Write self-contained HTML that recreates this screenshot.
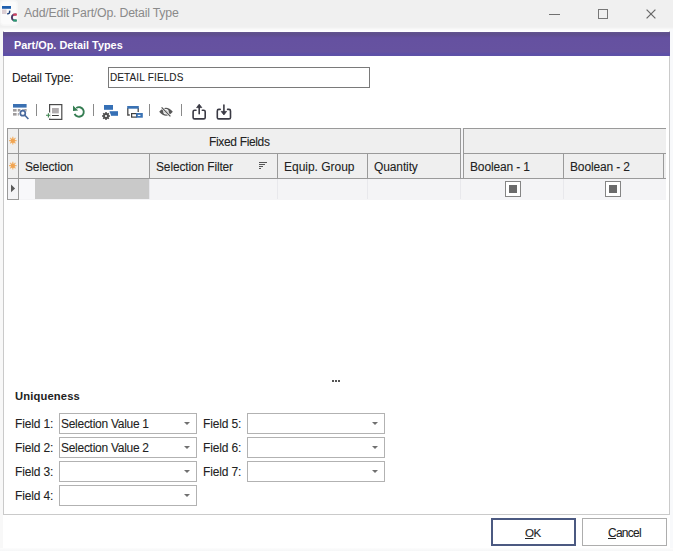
<!DOCTYPE html>
<html><head><meta charset="utf-8">
<style>
*{box-sizing:border-box;margin:0;padding:0}
html,body{width:673px;height:551px;overflow:hidden;background:#fff}
body{position:relative;font-family:"Liberation Sans",sans-serif;font-size:11px;color:#222}
.a{position:absolute;white-space:nowrap}
#title{left:0;top:0;width:673px;height:31px;background:linear-gradient(#f0f0f0 0,#f0f0f0 27px,#f8f8f8 29px,#fff 31px)}
#ttext{left:24px;top:6px;font-size:12.3px;letter-spacing:-0.2px;color:#8a8a8a}
#panel{left:3px;top:31px;width:667px;height:484px;border:1px solid #cacaca;border-top:none}
#hdr{left:3px;top:32px;width:667px;height:24px;background:linear-gradient(#64568f 0,#5e4e8c 2px,#6551a0 6px,#6652a0 20px,#5d4fa8 22px,#5f52a6 24px)}
#htext{left:14px;top:39px;font-weight:bold;color:#fff;font-size:10.9px}
.lbl{color:#222;font-size:12px;letter-spacing:-0.15px;-webkit-text-stroke:0.08px #222}
.inp{border:1px solid #7a7a7a;background:#fff}
.sep{width:1px;height:12px;background:#8a8a8a;top:104px}
.hc{background:#efefef}
.bl{background:#9a9a9a}
.combo{border:1px solid #b2b2b2;background:#fff;width:138px;height:21px}
.arr{width:0;height:0;border-left:3px solid transparent;border-right:3px solid transparent;border-top:3px solid #707070}
.btn{border:1px solid #adadad;background:#fff;width:85px;height:28px}
</style></head><body>
<div id="title" class="a"></div>
<!-- app icon -->
<svg class="a" style="left:0;top:0" width="24" height="28" viewBox="0 0 24 28">
  <rect x="0" y="0" width="18" height="26" rx="4" fill="#fff" opacity="0.4"/>
  <rect x="1" y="1.5" width="15.5" height="23" rx="3" fill="#fff" opacity="0.5"/>
  <rect x="2" y="6" width="9" height="2.8" fill="#1f5fae"/>
  <rect x="2" y="9.4" width="4.5" height="4.6" fill="#dccfd4"/>
  <path d="M9.6 10.6 Q10.2 14 7.2 13.8" stroke="#1d3f7a" stroke-width="1.5" fill="none"/>
  <path d="M16.2 14.6 Q12 14 11.9 17.5 Q12 21 16.4 20.5" stroke="#4c3a66" stroke-width="2" fill="none"/>
  <path d="M13.2 14.6 L16.9 14.6" stroke="#d64060" stroke-width="2"/>
  <path d="M13 20.5 L16.9 20.5" stroke="#2a9a72" stroke-width="2"/>
</svg>
<div id="ttext" class="a">Add/Edit Part/Op. Detail Type</div>
<!-- window controls -->
<div class="a" style="left:549px;top:14px;width:11px;height:1px;background:#707070"></div>
<div class="a" style="left:598px;top:9px;width:10px;height:10px;border:1px solid #777"></div>
<svg class="a" style="left:646px;top:9px" width="10" height="10" viewBox="0 0 10 10"><path d="M0.6 0.6L9.4 9.4M9.4 0.6L0.6 9.4" stroke="#686868" stroke-width="1.25"/></svg>

<div class="a" style="left:0;top:29px;width:3px;height:522px;background:#f8f8f8"></div>
<div class="a" style="left:670px;top:29px;width:3px;height:522px;background:#f8f9fb"></div>
<div class="a" style="left:0;top:548px;width:673px;height:3px;background:linear-gradient(#fdfdfd,#f5f6f7)"></div>
<div id="panel" class="a"></div>
<div id="hdr" class="a"></div>
<div id="htext" class="a">Part/Op. Detail Types</div>

<div class="a lbl" style="left:12px;top:71px">Detail Type:</div>
<div class="a inp" style="left:108px;top:67px;width:262px;height:21px"></div>
<div class="a lbl" style="left:110px;top:71px;font-size:11.4px;letter-spacing:0.1px;word-spacing:0.5px;transform:scaleX(0.88);transform-origin:0 0">DETAIL FIELDS</div>

<!-- toolbar -->
<svg class="a" style="left:0;top:96px" width="240" height="28" viewBox="0 96 240 28">
  <!-- icon1 grid search -->
  <rect x="13" y="104" width="13.6" height="3.6" fill="#3a70b2"/>
  <rect x="13" y="109" width="3.6" height="2.6" fill="#9e9b9c"/>
  <rect x="17.8" y="109" width="2.6" height="2.6" fill="#9e9b9c"/>
  <rect x="22" y="109" width="4.6" height="2.6" fill="#9e9b9c"/>
  <rect x="13" y="113" width="3.6" height="2.6" fill="#9e9b9c"/>
  <rect x="17.8" y="113" width="1" height="2.6" fill="#9e9b9c"/>
  <circle cx="22.8" cy="113.2" r="3.6" fill="#fff"/>
  <circle cx="22.8" cy="113.2" r="2.5" stroke="#4a6a9e" stroke-width="1.7" fill="#fff"/>
  <path d="M24.6 115 L28.4 119" stroke="#4a6a9e" stroke-width="1.6"/>
  <!-- icon2 -->
  <rect x="49.6" y="104.6" width="12.2" height="14.8" stroke="#4a4a4a" stroke-width="1.2" fill="#fff"/>
  <rect x="52" y="108" width="6.8" height="5.4" fill="#b0acae"/>
  <path d="M52 115.5 H58.8" stroke="#3c3c3c" stroke-width="1"/>
  <rect x="47.5" y="112.5" width="3" height="6" fill="#fff"/>
  <path d="M46 115.3 H50.2 M48.4 113.2 V117.4" stroke="#3f8450" stroke-width="1.1"/>
  <!-- refresh -->
  <path d="M76.3 107.95 A4.8 4.8 0 1 1 74.6 113.9" stroke="#357d52" stroke-width="1.9" fill="none"/>
  <path d="M73 105.6 L73 111 L78.2 110.6 Z" fill="#357d52"/>
  <!-- icon4 -->
  <rect x="104" y="105" width="9" height="4.8" fill="#3670b6"/>
  <rect x="109.6" y="111.2" width="8.4" height="4.6" fill="#3670b6"/>
  <circle cx="106" cy="116" r="5" fill="#fff"/>
  <circle cx="106" cy="116" r="2.9" fill="#505050"/>
  <path d="M106 112 V120 M102 116 H110 M103.2 113.2 L108.8 118.8 M108.8 113.2 L103.2 118.8" stroke="#505050" stroke-width="1.5"/>
  <circle cx="106" cy="116" r="1.1" fill="#fff"/>
  <!-- icon5 -->
  <path d="M127.8 108 V115 H138.2 V108" stroke="#4a4a4a" stroke-width="1.3" fill="none"/>
  <rect x="127.2" y="106" width="11.6" height="2.7" fill="#3a72b4"/>
  <rect x="129.8" y="112" width="14" height="6.8" fill="#fff"/>
  <rect x="131.6" y="113.6" width="5" height="3.5" stroke="#3f3f3f" stroke-width="1.2" fill="#fff"/>
  <rect x="136.2" y="113" width="6.6" height="4.7" fill="#3a72b4"/>
  <path d="M137.8 115.4 H140.4" stroke="#fff" stroke-width="1.1"/>
  <!-- eye slash -->
  <path d="M159.2 111.8 Q166 103.8 172.8 111.8 Q166 119.6 159.2 111.8 Z" fill="#585858"/>
  <circle cx="166" cy="111.8" r="2.7" fill="#fff"/>
  <circle cx="166" cy="111.8" r="1.5" fill="#585858"/>
  <path d="M161 106.6 L171 116.8" stroke="#fff" stroke-width="2.4"/>
  <path d="M161.6 107.4 L170.4 116.4" stroke="#585858" stroke-width="1.3"/>
  <!-- upload -->
  <path d="M196 110.2 H194.6 Q193.1 110.2 193.1 111.7 V117.4 Q193.1 118.9 194.6 118.9 H203.7 Q205.2 118.9 205.2 117.4 V111.7 Q205.2 110.2 203.7 110.2 H202.3" stroke="#3a3a44" stroke-width="1.6" fill="none" stroke-linecap="round"/>
  <path d="M199.2 113.8 V105.5" stroke="#3a3a44" stroke-width="1.6" fill="none" stroke-linecap="round"/>
  <path d="M196.6 107.6 L199.2 104.2 L201.8 107.6 Z" fill="#3a3a44" stroke="#3a3a44" stroke-width="0.8" stroke-linejoin="round"/>
  <!-- download -->
  <path d="M220.2 109.4 H218.8 Q217.3 109.4 217.3 110.9 V117.4 Q217.3 118.9 218.8 118.9 H229 Q230.5 118.9 230.5 117.4 V110.9 Q230.5 109.4 229 109.4 H227.6" stroke="#3a3a44" stroke-width="1.6" fill="none" stroke-linecap="round"/>
  <path d="M223.9 105 V112" stroke="#3a3a44" stroke-width="1.6" fill="none" stroke-linecap="round"/>
  <path d="M221.2 111.4 L223.9 114.9 L226.6 111.4 Z" fill="#3a3a44" stroke="#3a3a44" stroke-width="0.8" stroke-linejoin="round"/>
</svg>
<div class="a sep" style="left:36px"></div>
<div class="a sep" style="left:93px"></div>
<div class="a sep" style="left:149px"></div>
<div class="a sep" style="left:181px"></div>

<!-- grid -->
<div class="a" style="left:7px;top:128px;width:659px;height:72px;background:#f4f4f6"></div>
<!-- header backgrounds -->
<div class="a hc" style="left:7px;top:128px;width:454px;height:51px"></div>
<div class="a hc" style="left:463px;top:128px;width:203px;height:51px"></div>
<!-- lines -->
<div class="a bl" style="left:7px;top:128px;width:454px;height:1px"></div>
<div class="a bl" style="left:463px;top:128px;width:203px;height:1px"></div>
<div class="a bl" style="left:7px;top:153px;width:454px;height:1px"></div>
<div class="a bl" style="left:463px;top:153px;width:203px;height:1px"></div>
<div class="a bl" style="left:7px;top:178px;width:659px;height:1px"></div>
<div class="a bl" style="left:7px;top:199px;width:12px;height:1px"></div>
<div class="a bl" style="left:7px;top:128px;width:1px;height:72px"></div>
<div class="a bl" style="left:18px;top:128px;width:1px;height:72px"></div>
<div class="a bl" style="left:460px;top:128px;width:1px;height:51px"></div>
<div class="a bl" style="left:463px;top:128px;width:1px;height:51px"></div>
<div class="a bl" style="left:149px;top:153px;width:1px;height:26px"></div>
<div class="a bl" style="left:277px;top:153px;width:1px;height:26px"></div>
<div class="a bl" style="left:367px;top:153px;width:1px;height:26px"></div>
<div class="a bl" style="left:563px;top:153px;width:1px;height:26px"></div>
<div class="a bl" style="left:663px;top:153px;width:1px;height:26px"></div>
<!-- data row faint lines -->
<div class="a" style="left:149px;top:179px;width:1px;height:20px;background:#e8e8ec"></div>
<div class="a" style="left:277px;top:179px;width:1px;height:20px;background:#e8e8ec"></div>
<div class="a" style="left:367px;top:179px;width:1px;height:20px;background:#e8e8ec"></div>
<div class="a" style="left:460px;top:179px;width:1px;height:20px;background:#e8e8ec"></div>
<div class="a" style="left:563px;top:179px;width:1px;height:20px;background:#e8e8ec"></div>
<div class="a" style="left:8px;top:179px;width:10px;height:20px;background:#f4f4f6"></div>
<div class="a" style="left:19px;top:179px;width:16px;height:20px;background:#f8f8fa"></div>
<div class="a" style="left:35px;top:179px;width:114px;height:20px;background:#c9c9c9"></div>
<!-- asterisks -->
<svg class="a" style="left:8px;top:136px" width="10" height="10" viewBox="0 0 10 10"><g stroke="#f3b46c" stroke-width="1.2"><path d="M4.8 0.8V8.4M1 4.6H8.6M2.1 1.9L7.5 7.3M7.5 1.9L2.1 7.3"/></g><circle cx="4.8" cy="4.6" r="2.2" fill="#f0a452"/></svg>
<svg class="a" style="left:8px;top:161px" width="10" height="10" viewBox="0 0 10 10"><g stroke="#f3b46c" stroke-width="1.2"><path d="M4.8 0.8V8.4M1 4.6H8.6M2.1 1.9L7.5 7.3M7.5 1.9L2.1 7.3"/></g><circle cx="4.8" cy="4.6" r="2.2" fill="#f0a452"/></svg>
<svg class="a" style="left:10px;top:184px" width="6" height="10" viewBox="0 0 6 10"><path d="M1 0.6 L5.1 4.4 L1 8.2 Z" fill="#5a5a5a"/></svg>
<!-- header text -->
<div class="a lbl" style="left:209px;top:135px;letter-spacing:-0.34px">Fixed Fields</div>
<div class="a lbl" style="left:25px;top:160px">Selection</div>
<div class="a lbl" style="left:156px;top:160px">Selection Filter</div>
<svg class="a" style="left:258px;top:162px" width="10" height="8" viewBox="0 0 10 8"><path d="M1 0.5H9M1 2.5H7M1 4.5H5M1 6.5H3" stroke="#555" stroke-width="1"/></svg>
<div class="a lbl" style="left:284px;top:160px;letter-spacing:-0.02px">Equip. Group</div>
<div class="a lbl" style="left:374px;top:160px;letter-spacing:-0.12px">Quantity</div>
<div class="a lbl" style="left:470px;top:160px">Boolean - 1</div>
<div class="a lbl" style="left:570px;top:160px">Boolean - 2</div>
<!-- checkboxes -->
<div class="a" style="left:505px;top:181px;width:16px;height:16px;border:1px solid #858585;background:#fff"></div>
<div class="a" style="left:509px;top:185px;width:8px;height:8px;background:#6b6b6b"></div>
<div class="a" style="left:605px;top:181px;width:16px;height:16px;border:1px solid #858585;background:#fff"></div>
<div class="a" style="left:609px;top:185px;width:8px;height:8px;background:#6b6b6b"></div>

<!-- dots -->
<div class="a" style="left:332px;top:380px;width:2px;height:2px;background:#555"></div>
<div class="a" style="left:335px;top:380px;width:2px;height:2px;background:#555"></div>
<div class="a" style="left:338px;top:380px;width:2px;height:2px;background:#555"></div>

<!-- uniqueness -->
<div class="a lbl" style="left:15px;top:390px;font-weight:bold;font-size:11.2px;letter-spacing:0.15px;-webkit-text-stroke:0">Uniqueness</div>
<div class="a lbl" style="left:15px;top:417px">Field 1:</div>
<div class="a lbl" style="left:15px;top:441px">Field 2:</div>
<div class="a lbl" style="left:15px;top:465px">Field 3:</div>
<div class="a lbl" style="left:15px;top:489px">Field 4:</div>
<div class="a lbl" style="left:203px;top:417px">Field 5:</div>
<div class="a lbl" style="left:203px;top:441px">Field 6:</div>
<div class="a lbl" style="left:203px;top:465px">Field 7:</div>

<div class="a combo" style="left:59px;top:413px"></div>
<div class="a combo" style="left:59px;top:437px"></div>
<div class="a combo" style="left:59px;top:461px"></div>
<div class="a combo" style="left:59px;top:485px"></div>
<div class="a combo" style="left:247px;top:413px"></div>
<div class="a combo" style="left:247px;top:437px"></div>
<div class="a combo" style="left:247px;top:461px"></div>
<div class="a lbl" style="left:61px;top:417px;letter-spacing:-0.28px">Selection Value 1</div>
<div class="a lbl" style="left:61px;top:441px;letter-spacing:-0.28px">Selection Value 2</div>
<div class="a arr" style="left:184px;top:422px"></div>
<div class="a arr" style="left:184px;top:446px"></div>
<div class="a arr" style="left:184px;top:470px"></div>
<div class="a arr" style="left:184px;top:494px"></div>
<div class="a arr" style="left:372px;top:422px"></div>
<div class="a arr" style="left:372px;top:446px"></div>
<div class="a arr" style="left:372px;top:470px"></div>

<!-- buttons -->
<div class="a btn" style="left:491px;top:518px;border:2px solid #4b5981"></div>
<div class="a lbl" style="left:525px;top:526px;letter-spacing:-0.6px;font-size:11.6px"><u>O</u>K</div>
<div class="a btn" style="left:582px;top:518px"></div>
<div class="a lbl" style="left:608px;top:526px;letter-spacing:-0.75px"><u>C</u>ancel</div>
</body></html>
